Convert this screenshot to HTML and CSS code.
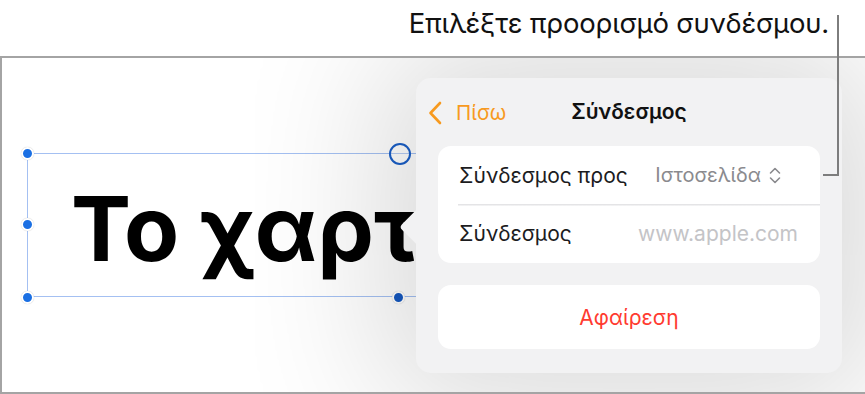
FILE: index.html
```html
<!DOCTYPE html>
<html lang="el">
<head>
<meta charset="utf-8">
<link rel="stylesheet" href="styles.css">
</head>
<body>
<div class="page">
  <header class="caption">Επιλέξτε προορισμό συνδέσμου.</header>
  <div class="callout"></div>
  <section class="stage">
    <div class="canvas">
      <div class="selection">
        <div class="headline">Το χαρτί</div>
        <span class="handle h-tl"></span>
        <span class="handle h-ml"></span>
        <span class="handle h-bl"></span>
        <span class="handle h-br"></span>
        <span class="ring h-tr"></span>
      </div>
    </div>
    <div class="popover">
      <div class="nav">
        <button class="back">
          <svg width="14" height="24" viewBox="0 0 14 24"><polyline points="12,2 2.5,12 12,22" fill="none" stroke="#f79a1f" stroke-width="2.6" stroke-linecap="round" stroke-linejoin="round"/></svg>
          <span>Πίσω</span>
        </button>
        <div class="title">Σύνδεσμος</div>
      </div>
      <div class="group">
        <div class="row">
          <span class="label">Σύνδεσμος προς</span>
          <span class="value">Ιστοσελίδα
            <svg width="12" height="17" viewBox="0 0 12 17"><polyline points="1.5,6 6,1.5 10.5,6" fill="none" stroke="#8a8a8e" stroke-width="1.6" stroke-linecap="round" stroke-linejoin="round"/><polyline points="1.5,11 6,15.5 10.5,11" fill="none" stroke="#8a8a8e" stroke-width="1.6" stroke-linecap="round" stroke-linejoin="round"/></svg>
          </span>
        </div>
        <div class="row">
          <span class="label">Σύνδεσμος</span>
          <span class="placeholder">www.apple.com</span>
        </div>
      </div>
      <div class="group action">Αφαίρεση</div>
    </div>
  </section>
</div>
</body>
</html>
```
FILE: styles.css
```css
* { box-sizing: border-box; }
html, body { margin: 0; padding: 0; background: #fff; }
body { width: 865px; height: 394px; overflow: hidden; font-family: Inter, "Liberation Sans", Arial, sans-serif; }

.page { position: relative; width: 865px; height: 394px; }

.caption {
  height: 56px;
  padding-right: 36px;
  padding-top: 7px;
  text-align: right;
  font-size: 27.5px;
  line-height: 32px;
  color: #111;
  letter-spacing: -0.2px;
}

.callout {
  position: absolute;
  left: 823px;
  top: 15px;
  width: 16px;
  height: 161px;
  border-right: 2px solid #7d7d7d;
  border-bottom: 2px solid #7d7d7d;
  z-index: 5;
}

.stage {
  position: relative;
  height: 338px;
  border-top: 2px solid #a4a4a4;
  border-left: 2px solid #a4a4a4;
  border-bottom: 2px solid #a4a4a4;
  background: #fff;
  overflow: hidden;
  display: flex;
  align-items: flex-start;
}

.canvas {
  width: 414px;
  flex: none;
  height: 100%;
  padding-top: 95px;
  padding-left: 25px;
}

.selection {
  position: relative;
  width: 420px;
  height: 144px;
  border-top: 1.5px solid #a4c0f2;
  border-bottom: 1.5px solid #a4c0f2;
  border-left: 1.5px solid #a4c0f2;
  padding-top: 30px;
  padding-left: 43px;
}

.headline {
  font-size: 90px;
  line-height: 90px;
  font-weight: 700;
  color: #000;
  white-space: nowrap;
}

.handle {
  position: absolute;
  width: 13px;
  height: 13px;
  border-radius: 50%;
  background: #1a6fe3;
  border: 2px solid #fff;
  box-shadow: 0 0 1px rgba(0,0,0,0.25);
}
.h-tl { left: -7.5px; top: -7.5px; }
.h-ml { left: -7.5px; top: 64px; }
.h-bl { left: -7.5px; bottom: -7.5px; }
.h-br { left: 364px; bottom: -7.5px; background: #1458c0; }
.ring {
  position: absolute;
  left: 361px;
  top: -11.5px;
  width: 22px;
  height: 22px;
  border-radius: 50%;
  border: 2px solid #1a5fc8;
  background: rgba(255,255,255,0.2);
}

.popover {
  position: relative;
  z-index: 2;
  margin-top: 20px;
  width: 426px;
  flex: none;
  background: #f2f2f3;
  border-radius: 15px;
  padding: 0 22px 24px;
  box-shadow: 0 0 150px 30px rgba(0,0,0,0.16);
}
.popover::before {
  content: "";
  position: absolute;
  left: -11px;
  top: 135px;
  width: 28px;
  height: 28px;
  background: #f2f2f3;
  transform: rotate(45deg);
  border-radius: 4px;
}

.nav {
  position: relative;
  height: 68px;
  display: flex;
  align-items: center;
  justify-content: center;
  padding-bottom: 2px;
}
.back {
  position: absolute;
  left: -10px;
  top: 22px;
  display: flex;
  align-items: center;
  gap: 14px;
  background: none;
  border: 0;
  padding: 0;
  font-family: inherit;
  font-size: 20.5px;
  color: #f79a1f;
}
.title {
  font-size: 21px;
  font-weight: 600;
  color: #111;
}

.group {
  position: relative;
  background: #fff;
  border-radius: 13px;
}
.row {
  height: 58px;
  display: flex;
  align-items: center;
  justify-content: space-between;
  padding: 0 22px 0 21px;
  font-size: 21px;
}
.row + .row {
  height: 59px;
  background: linear-gradient(#e4e4e6, #e4e4e6) no-repeat 20px 0 / calc(100% - 20px) 1.5px;
}
.label { color: #1c1c1e; }
.value {
  color: #8a8a8e;
  font-size: 20px;
  display: flex;
  align-items: center;
  gap: 8px;
  padding-right: 17px;
}
.placeholder { color: #c4c4c7; }

.action {
  margin-top: 22px;
  height: 64px;
  display: flex;
  align-items: center;
  justify-content: center;
  font-size: 21px;
  color: #ff3b30;
}
```
